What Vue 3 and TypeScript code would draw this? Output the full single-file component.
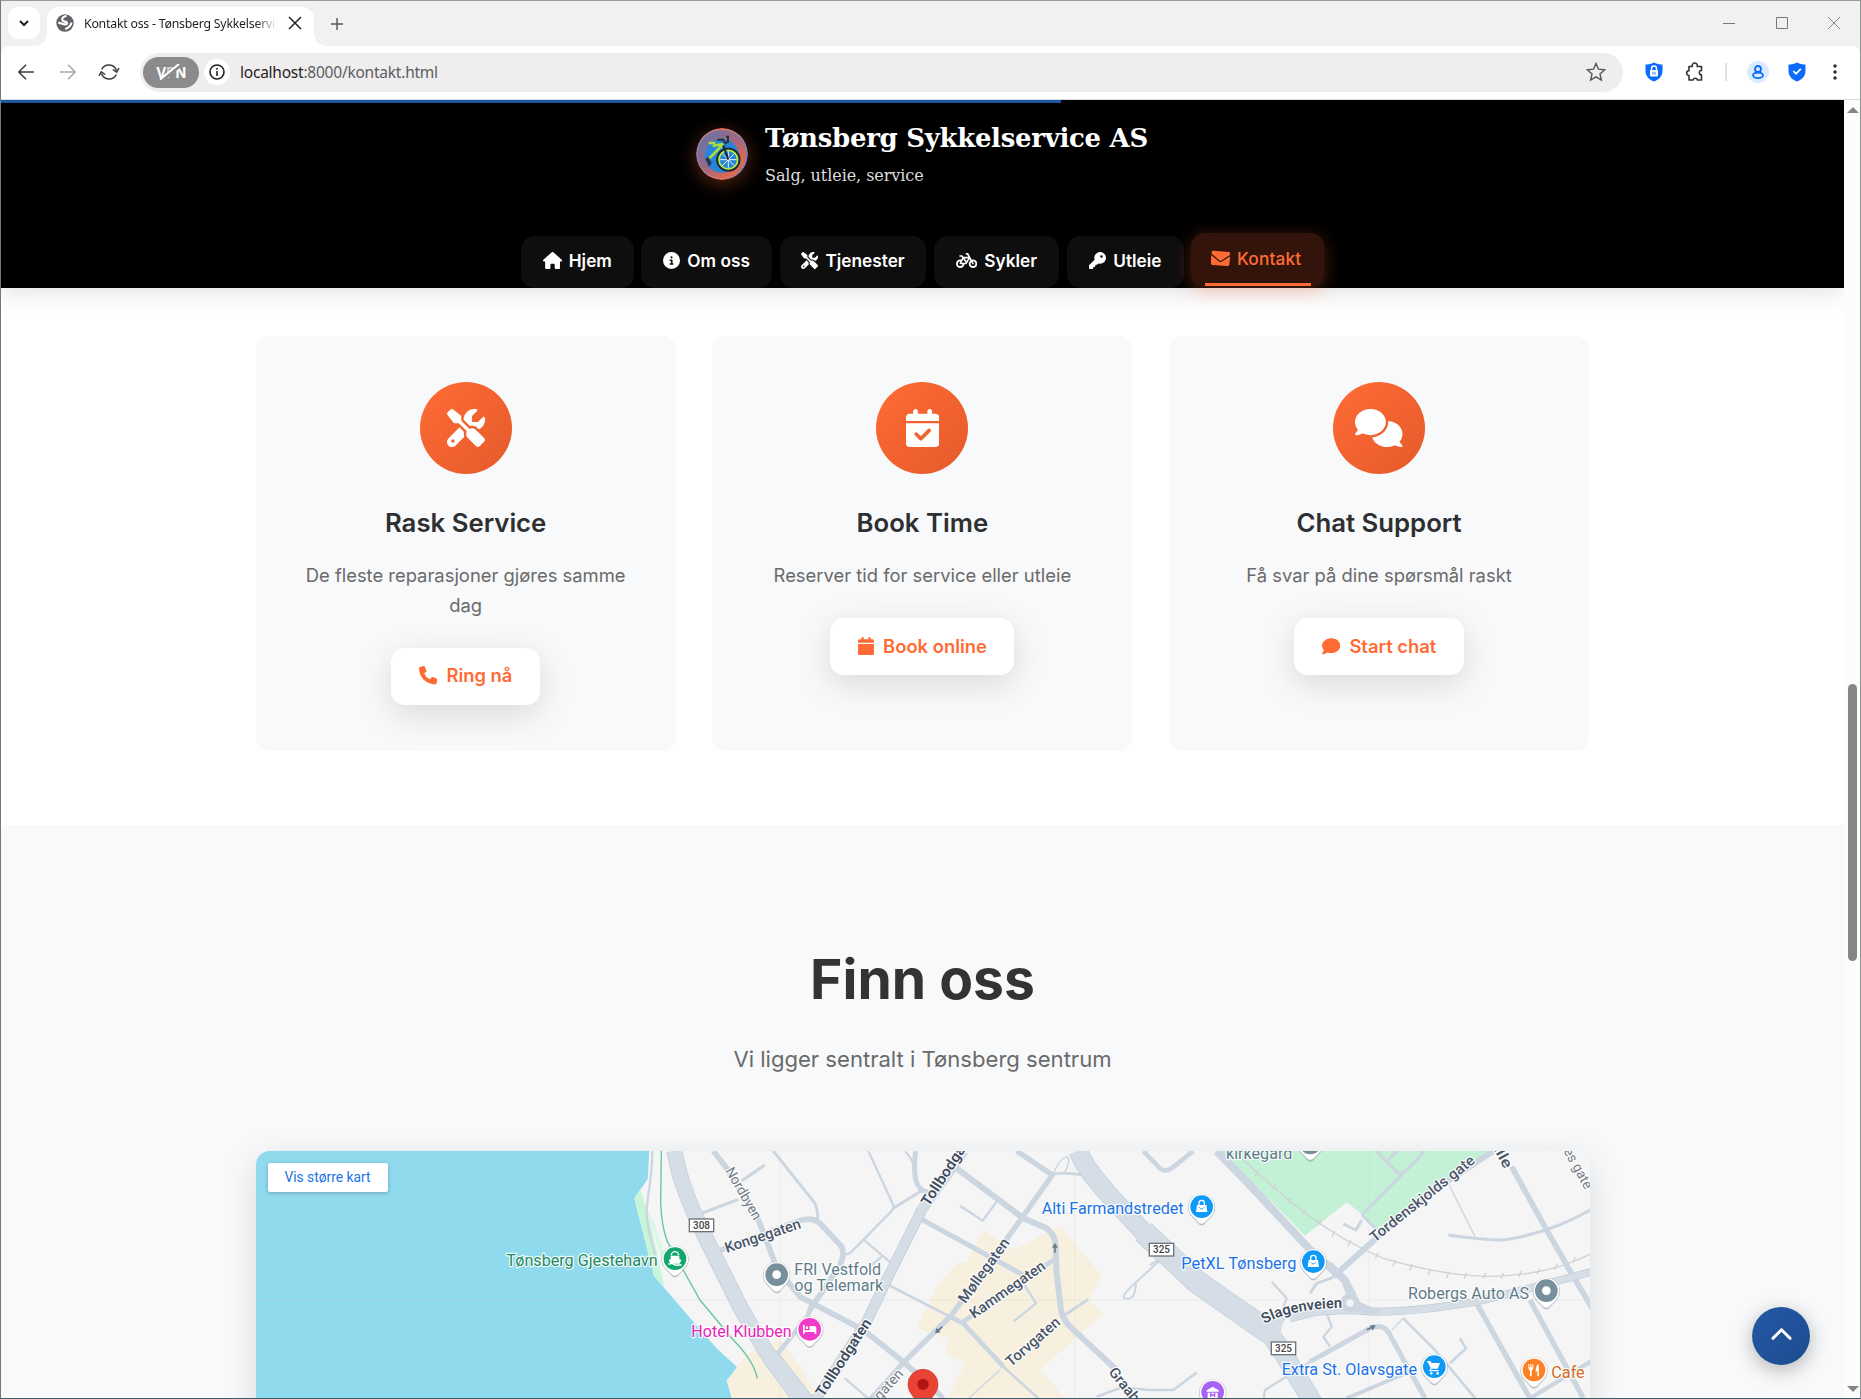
<script setup lang="ts">
interface Glyph { w: number; d: string }

const glyphs: Record<string, Glyph> = {
  house: { w: 576, d: 'M575.8 255.5c0 18-15 32.1-32 32.1h-32l.7 160.2c0 2.7-.2 5.4-.5 8.1V472c0 22.1-17.9 40-40 40H456c-1.1 0-2.2 0-3.3-.1c-1.4 .1-2.8 .1-4.2 .1H416 392c-22.1 0-40-17.9-40-40V448 384c0-17.7-14.3-32-32-32H256c-17.7 0-32 14.3-32 32v64 24c0 22.1-17.9 40-40 40H160 128.1c-1.5 0-3-.1-4.5-.2c-1.2 .1-2.4 .2-3.6 .2H104c-22.1 0-40-17.9-40-40V360c0-.9 0-1.9 .1-2.8V287.6H32c-18 0-32-14-32-32.1c0-9 3-17 10-24L266.4 8c7-7 15-8 22-8s15 2 21 7L564.8 231.5c8 7 12 15 11 24z' },
  info: { w: 512, d: 'M256 512A256 256 0 1 0 256 0a256 256 0 1 0 0 512zM216 336h24V272H216c-13.3 0-24-10.7-24-24s10.7-24 24-24h48c13.3 0 24 10.7 24 24v88h8c13.3 0 24 10.7 24 24s-10.7 24-24 24H216c-13.3 0-24-10.7-24-24s10.7-24 24-24zm40-208a32 32 0 1 1 0 64 32 32 0 1 1 0-64z' },
  tools: { w: 512, d: 'M78.6 5C69.1-2.4 55.6-1.5 47 7L7 47c-8.5 8.5-9.4 22-2.1 31.6l80 104c4.5 5.9 11.6 9.4 19 9.4h54.1l109 109c-14.7 29-10 65.4 14.3 89.6l112 112c12.5 12.5 32.8 12.5 45.3 0l64-64c12.5-12.5 12.5-32.8 0-45.3l-112-112c-24.2-24.2-60.6-29-89.6-14.3l-109-109V104c0-7.5-3.5-14.5-9.4-19L78.6 5zM19.9 396.1C7.2 408.8 0 426.1 0 444.1C0 481.6 30.4 512 67.9 512c18 0 35.3-7.2 48-19.9L233.7 374.3c-7.8-20.9-9-43.6-3.6-65.1l-61.7-61.7L19.9 396.1zM512 144c0-10.5-1.1-20.7-3.2-30.5c-2.4-11.2-16.1-14.1-24.2-6l-63.9 63.9c-3 3-7.1 4.7-11.3 4.7H352c-8.8 0-16-7.2-16-16V102.6c0-4.2 1.7-8.3 4.7-11.3l63.9-63.9c8.1-8.1 5.2-21.8-6-24.2C388.7 1.1 378.5 0 368 0C288.5 0 224 64.5 224 144l0 .8 85.3 85.3c36-9.1 75.8 .5 104 28.7L429 274.5c49-23 83-72.8 83-130.5zM56 432a24 24 0 1 1 48 0 24 24 0 1 1 -48 0z' },
  bicycle: { w: 640, d: 'M312 32c-13.3 0-24 10.7-24 24s10.7 24 24 24h25.7l34.6 64H222.9l-27.4-38C191 99.7 183.7 96 176 96H120c-13.3 0-24 10.7-24 24s10.7 24 24 24h43.7l22.1 30.7-26.6 53.1c-10-2.5-20.5-3.8-31.2-3.8C57.3 224 0 281.3 0 352s57.3 128 128 128c65.3 0 119.1-48.9 127-112h49c8.5 0 16.3-4.5 20.7-11.8l84.8-143.5 21.7 40.1C402.4 276.3 384 312 384 352c0 70.7 57.3 128 128 128s128-57.3 128-128s-57.3-128-128-128c-13.5 0-26.5 2.1-38.7 6L375.4 48.8C369.8 38.4 359 32 347.2 32H312zM458.6 303.7l32.3 59.7c6.3 11.7 20.9 16 32.5 9.7s16-20.9 9.7-32.5l-32.3-59.7c3.6-.6 7.4-.9 11.2-.9c39.8 0 72 32.2 72 72s-32.2 72-72 72s-72-32.2-72-72c0-18.6 7-35.5 18.6-48.3zM133.2 368h65c-7.3 32.1-36 56-70.2 56c-39.8 0-72-32.2-72-72s32.2-72 72-72c1.7 0 3.4 .1 5.1 .2l-24.2 48.5c-9 18.1 4.1 39.4 24.3 39.4zm33.7-48l50.7-101.3 72.9 101.2-.1 .1H166.8zm90.6-128H365.9L317 274.8 257.4 192z' },
  key: { w: 512, d: 'M336 352c97.2 0 176-78.8 176-176S433.2 0 336 0S160 78.8 160 176c0 18.7 2.9 36.8 8.3 53.7L7 391c-4.5 4.5-7 10.6-7 17v80c0 13.3 10.7 24 24 24h80c13.3 0 24-10.7 24-24V448h40c13.3 0 24-10.7 24-24V384h40c6.4 0 12.5-2.5 17-7l33.3-33.3c16.9 5.4 35 8.3 53.7 8.3zM376 96a40 40 0 1 1 0 80 40 40 0 1 1 0-80z' },
  envelope: { w: 512, d: 'M48 64C21.5 64 0 85.5 0 112c0 15.1 7.1 29.3 19.2 38.4L236.8 313.6c11.4 8.5 27 8.5 38.4 0L492.8 150.4c12.1-9.1 19.2-23.3 19.2-38.4c0-26.5-21.5-48-48-48H48zM0 176V384c0 35.3 28.7 64 64 64H448c35.3 0 64-28.7 64-64V176L294.4 339.2c-22.8 17.1-54 17.1-76.8 0L0 176z' },
  phone: { w: 512, d: 'M164.9 24.6c-7.7-18.6-28-28.5-47.4-23.2l-88 24C12.1 30.2 0 46 0 64C0 311.4 200.6 512 448 512c18 0 33.8-12.1 38.6-29.5l24-88c5.3-19.4-4.6-39.7-23.2-47.4l-96-40c-16.3-6.8-35.2-2.1-46.3 11.6L304.7 368C234.3 334.7 177.3 277.7 144 207.3L193.3 167c13.7-11.2 18.4-30 11.6-46.3l-40-96z' },
  calendar: { w: 448, d: 'M96 32V64H48C21.5 64 0 85.5 0 112v48H448V112c0-26.5-21.5-48-48-48H352V32c0-17.7-14.3-32-32-32s-32 14.3-32 32V64H160V32c0-17.7-14.3-32-32-32S96 14.3 96 32zM448 192H0V464c0 26.5 21.5 48 48 48H400c26.5 0 48-21.5 48-48V192z' },
  calendarCheck: { w: 448, d: 'M128 0c17.7 0 32 14.3 32 32V64H288V32c0-17.7 14.3-32 32-32s32 14.3 32 32V64h48c26.5 0 48 21.5 48 48v48H0V112C0 85.5 21.5 64 48 64H96V32c0-17.7 14.3-32 32-32zM0 192H448V464c0 26.5-21.5 48-48 48H48c-26.5 0-48-21.5-48-48V192zM329 305c9.4-9.4 9.4-24.6 0-33.9s-24.6-9.4-33.9 0l-95 95-47-47c-9.4-9.4-24.6-9.4-33.9 0s-9.4 24.6 0 33.9l64 64c9.4 9.4 24.6 9.4 33.9 0L329 305z' },
  comments: { w: 640, d: 'M208 352c114.9 0 208-78.8 208-176S322.9 0 208 0S0 78.8 0 176c0 38.6 14.7 74.3 39.6 103.4c-3.5 9.4-8.7 17.7-14.2 24.7c-4.8 6.2-9.7 11-13.3 14.3c-1.8 1.6-3.3 2.9-4.3 3.7c-.5 .4-.9 .7-1.1 .8l-.2 .2 0 0 0 0C1 327.2-1.4 334.4 .8 340.9S9.1 352 16 352c21.8 0 43.8-5.6 62.1-12.5c9.2-3.5 17.8-7.4 25.3-11.4C134.1 343.3 169.8 352 208 352zM448 176c0 112.3-99.1 196.9-216.5 207C255.8 457.4 336.4 512 432 512c38.2 0 73.9-8.7 104.7-23.9c7.5 4 16 7.9 25.2 11.4c18.3 6.9 40.3 12.5 62.1 12.5c6.9 0 13.1-4.5 15.2-11.1c2.1-6.6-.2-13.8-5.8-17.9l0 0 0 0-.2-.2c-.2-.2-.6-.4-1.1-.8c-1-.8-2.5-2-4.3-3.7c-3.6-3.3-8.5-8.1-13.3-14.3c-5.5-7-10.7-15.4-14.2-24.7c24.9-29 39.6-64.7 39.6-103.4c0-92.8-84.9-168.9-192.6-175.5c.4 5.1 .6 10.3 .6 15.5z' },
  comment: { w: 512, d: 'M512 240c0 114.9-114.6 208-256 208c-37.1 0-72.3-6.4-104.1-17.9c-11.9 8.7-31.3 20.6-54.3 30.6C73.6 471.1 44.7 480 16 480c-6.5 0-12.3-3.9-14.8-9.9c-2.5-6-1.1-12.8 3.4-17.4l.3-.3c.3-.3 .7-.7 1.3-1.4c1.1-1.2 2.8-3.1 4.9-5.7c4.1-5 9.6-12.4 15.2-21.6c10-16.6 19.5-38.4 21.4-62.9C17.7 326.8 0 285.1 0 240C0 125.1 114.6 32 256 32s256 93.1 256 208z' },
  chevronUp: { w: 512, d: 'M233.4 105.4c12.5-12.5 32.8-12.5 45.3 0l192 192c12.5 12.5 12.5 32.8 0 45.3s-32.8 12.5-45.3 0L256 173.3 86.6 342.6c-12.5 12.5-32.8 12.5-45.3 0s-12.5-32.8 0-45.3l192-192z' },
}

interface NavItem { label: string; icon: string; cls: string; active?: boolean }
const nav: NavItem[] = [
  { label: 'Hjem', icon: 'house', cls: 'n-home' },
  { label: 'Om oss', icon: 'info', cls: 'n-about' },
  { label: 'Tjenester', icon: 'tools', cls: 'n-services' },
  { label: 'Sykler', icon: 'bicycle', cls: 'n-bikes' },
  { label: 'Utleie', icon: 'key', cls: 'n-rent' },
  { label: 'Kontakt', icon: 'envelope', cls: 'n-contact', active: true },
]

interface Card { title: string; text: string; icon: string; action: string; actionIcon: string }
const cards: Card[] = [
  { title: 'Rask Service', text: 'De fleste reparasjoner gjøres samme dag', icon: 'tools', action: 'Ring nå', actionIcon: 'phone' },
  { title: 'Book Time', text: 'Reserver tid for service eller utleie', icon: 'calendarCheck', action: 'Book online', actionIcon: 'calendar' },
  { title: 'Chat Support', text: 'Få svar på dine spørsmål raskt', icon: 'comments', action: 'Start chat', actionIcon: 'comment' },
]

/* Map units: three per CSS pixel. */
interface Road { d: string; w: number }
const roads: Road[] = [
  { d: 'M1207 33C1206 130 1188 180 1190 225C1192 270 1205 300 1215 345', w: 7 },
  { d: 'M1390 33L1430 85L1525 240L1560 330L1580 385L1650 470L1840 570L1960 665L2070 765L2080 780', w: 17 },
  { d: 'M1400 335L1650 242Q1690 228 1715 255L1775 320Q1785 345 1770 375L1680 510', w: 17 },
  { d: 'M1690 480L1672 530L1580 645', w: 14 },
  { d: 'M1570 33L1695 190Q1706 215 1702 240', w: 9 },
  { d: 'M1350 222L1465 178M1475 122L1545 75', w: 9 },
  { d: 'M1855 33L1930 195Q1932 210 1920 218L1805 335Q1795 345 1785 343', w: 7 },
  { d: 'M1930 205L2010 155L2035 152', w: 9 },
  { d: 'M1965 33Q1985 55 1990 75', w: 6 },
  { d: 'M1997 33C1988 110 1995 150 2035 158', w: 15 },
  { d: 'M1840 298L1925 370M1865 375L1895 350', w: 7 },
  { d: 'M1915 435L2100 530', w: 8 },
  { d: 'M2120 85L2320 235L2390 265Q2415 285 2416 310L2420 400L2433 510Q2440 540 2460 560L2600 690', w: 18 },
  { d: 'M2015 238L2210 345L2320 405', w: 15 },
  { d: 'M2320 430L2358 490L2290 545', w: 7 },
  { d: 'M2300 33L2407 105L2315 235L2105 525L1960 668L1860 780', w: 16 },
  { d: 'M2410 360L2140 545M2100 530L2140 550L2260 680', w: 14 },
  { d: 'M2260 680L2370 780', w: 8 },
  { d: 'M2250 690L2150 780', w: 4 },
  { d: 'M2440 528L2515 478', w: 9 },
  { d: 'M2130 197L2198 242L2240 185', w: 7 },
  { d: 'M2410 102Q2450 95 2510 108', w: 8 },
  { d: 'M2410 100Q2430 55 2450 50Q2465 60 2445 95', w: 4 },
  { d: 'M2730 360L2655 430Q2610 470 2625 475Q2655 485 2658 430', w: 6 },
  { d: 'M2680 33L2730 85Q2745 98 2765 85L2830 33', w: 14 },
  { d: 'M2540 770L2620 740M2640 745L2700 750L2770 750L2790 735L2840 698', w: 8 },
  { d: 'M1785 715L1860 780', w: 7 },
  { d: 'M2900 33L2990 125L3190 340L3285 420L3300 460', w: 24 },
  { d: 'M3240 370Q3300 430 3315 470', w: 14 },
  { d: 'M3730 33L3530 165L3390 285L3250 410', w: 18 },
  { d: 'M3595 285Q3700 300 3760 300Q3900 280 4025 208', w: 9 },
  { d: 'M3785 80L3890 270L3970 410L4030 510', w: 17 },
  { d: 'M3680 490L3840 775M3840 480L4000 775', w: 16 },
  { d: 'M3840 775L4025 663', w: 13 },
  { d: 'M3180 665L3360 565Q3405 545 3425 595L3525 775', w: 15 },
  { d: 'M3460 535L3555 630L3680 780', w: 8 },
  { d: 'M3600 670L3648 625L3630 595', w: 8 },
  { d: 'M3290 775L3490 690', w: 12 },
  { d: 'M3040 780L3045 750L3180 665', w: 7 },
  { d: 'M3065 425L3110 475L3100 500M3230 520L3245 560L3220 590L3240 620', w: 7 },
  { d: 'M3335 225L3500 60L3520 33M3380 33L3445 100M3415 60L3440 33M3335 225L3380 268M3445 100L3460 95', w: 9 },
  { d: 'M3280 252L3318 270L3335 240', w: 9 },
  { d: 'M3180 460L3200 430L3250 412', w: 9 },
  { d: 'M3595 130L3675 290M3460 535L3425 570', w: 4 },
  { d: 'M2740 350L2700 375', w: 6 },
]
const mainRoads: Road[] = [
  { d: 'M1273 33C1290 130 1330 220 1385 330L1470 500L1545 630L1660 790', w: 44 },
  { d: 'M1560 650L1670 790', w: 50 },
  { d: 'M2140 33L2015 210L1910 420L1850 545L1690 790', w: 28 },
  { d: 'M2485 33C2510 100 2590 180 2680 275L2820 410L3045 560L3100 640L3190 790', w: 54 },
  { d: 'M2680 275L2840 425L3060 580', w: 66 },
  { d: 'M3120 535L3200 515L3290 510L3380 515Q3500 515 3680 485L3860 440L4025 395', w: 20 },
]
const ticks = [[320, 100], [373, 142], [418, 182], [462, 215], [508, 248], [550, 282], [598, 310], [640, 330], [680, 347], [733, 370], [783, 382], [838, 396], [893, 405], [946, 407], [1003, 408], [1057, 408], [1110, 402], [1165, 394], [1218, 380], [1272, 360]]

interface Label { t: string; x: number; y: number; len: number; cls: string; r?: number }
const labels: Label[] = [
  { t: 'Tønsberg Gjestehavn', x: 769, y: 379, len: 454, cls: 'green' },
  { t: 'FRI Vestfold', x: 1633, y: 404, len: 260, cls: 'slate' },
  { t: 'og Telemark', x: 1633, y: 453, len: 267, cls: 'slate' },
  { t: 'Hotel Klubben', x: 1324, y: 592, len: 301, cls: 'pink' },
  { t: 'Alti Farmandstredet', x: 2375, y: 223, len: 426, cls: 'blue' },
  { t: 'PetXL Tønsberg', x: 2794, y: 388, len: 345, cls: 'blue' },
  { t: 'Extra St. Olavsgate', x: 3095, y: 704, len: 406, cls: 'blue' },
  { t: 'Robergs Auto AS', x: 3474, y: 476, len: 363, cls: 'slate' },
  { t: 'Cafe', x: 3904, y: 713, len: 100, cls: 'orange' },
  { t: 'kirkegård', x: 2928, y: 56, len: 199, cls: 'slate' },
  { t: 'Nordbyen', x: 1425, y: 92, len: 174, cls: 'minor', r: 60 },
  { t: 'Kongegaten', x: 1430, y: 339, len: 238, cls: 'street', r: -18.5 },
  { t: 'Tollbodga', x: 2036, y: 201, len: 206, cls: 'major', r: -57 },
  { t: 'Tollbodgaten', x: 1720, y: 773, len: 268, cls: 'major', r: -57 },
  { t: 'gaten', x: 1890, y: 783, len: 108, cls: 'minor', r: -48 },
  { t: 'Møllegaten', x: 2146, y: 493, len: 229, cls: 'street', r: -54 },
  { t: 'Kammegaten', x: 2172, y: 537, len: 266, cls: 'street', r: -35 },
  { t: 'Torvgaten', x: 2283, y: 682, len: 200, cls: 'street', r: -41 },
  { t: 'Graab', x: 2574, y: 697, len: 120, cls: 'street', r: 51 },
  { t: 'Tordenskjolds gate', x: 3374, y: 308, len: 388, cls: 'street', r: -38.5 },
  { t: 'alle', x: 3722, y: 13, len: 86, cls: 'street', r: 61 },
  { t: 'es gate', x: 3940, y: 33, len: 134, cls: 'minor', r: 61 },
]

interface Pin { x: number; y: number; color: string; kind: string }
const pins: Pin[] = [
  { x: 1275, y: 356, color: '#12a56c', kind: 'ferry' },
  { x: 1580, y: 404, color: '#78909c', kind: 'dot' },
  { x: 1679, y: 568, color: '#f13bc9', kind: 'bed' },
  { x: 2855, y: 200, color: '#0f9af7', kind: 'bag' },
  { x: 3190, y: 365, color: '#0f9af7', kind: 'bag' },
  { x: 3553, y: 680, color: '#0f9af7', kind: 'cart' },
  { x: 3889, y: 452, color: '#78909c', kind: 'dot' },
  { x: 3852, y: 690, color: '#ff8126', kind: 'food' },
  { x: 2888, y: 757, color: '#a763f5', kind: 'museum' },
  { x: 3181, y: 9, color: '#78909c', kind: 'dot' },
]
const shields = [{ t: '308', x: 1318, y: 237 }, { t: '325', x: 2698, y: 310 }, { t: '325', x: 3064, y: 606 }]
const arrows = [{ x: 2415, y: 323, r: -90 }, { x: 2066, y: 570, r: 138 }, { x: 3364, y: 563, r: -25 }]
</script>

<template>
  <div class="window">
    <div class="tabstrip">
      <button class="tab-search"><svg width="12" height="12" viewBox="0 0 12 12"><path d="M2 4l4 4 4-4" fill="none" stroke="#222" stroke-width="2" /></svg></button>
      <div class="tab">
        <svg class="globe" width="18" height="18" viewBox="0 0 18 18">
          <circle cx="9" cy="9" r="8.7" fill="#5f6368" />
          <path d="M10.500 1.800C7.500 2.600 6 4.200 6.300 6c.4 2 3.600 1.200 4.600 2.600.7 1.200-.5 1.900-2 1.800-2.200-.2-3.900-1.800-6.700-1.600" fill="none" stroke="#fff" stroke-width="2.200" />
          <path d="M15.500 8.500c-.5 3.300-2.700 5-6.300 6.700" fill="none" stroke="#fff" stroke-width="2" />
        </svg>
        <span class="tab-title">Kontakt oss - Tønsberg Sykkelservi</span>
        <svg class="tab-close" width="14" height="14" viewBox="0 0 14 14"><path d="M1 1l12 12M13 1L1 13" stroke="#222" stroke-width="1.500" /></svg>
      </div>
      <svg class="plus" width="12" height="12" viewBox="0 0 12 12"><path d="M6 0v12M0 6h12" stroke="#555" stroke-width="1.400" /></svg>
      <div class="winbtns">
        <svg width="12" height="12" viewBox="0 0 12 12"><path d="M0 6.500h12" stroke="#777" /></svg>
        <svg width="12" height="12" viewBox="0 0 12 12"><path d="M.5.5h11v11H.5z" fill="none" stroke="#777" /></svg>
        <svg width="12" height="12" viewBox="0 0 12 12"><path d="M0 0l12 12M12 0L0 12" stroke="#888" /></svg>
      </div>
    </div>

    <div class="toolbar">
      <svg width="18" height="18" viewBox="0 0 18 18"><path d="M17 9H2M9 1.800L1.800 9 9 16.200" fill="none" stroke="#3c3c3c" stroke-width="1.500" /></svg>
      <svg class="fwd" width="18" height="18" viewBox="0 0 18 18"><path d="M1 9h15M9 1.800L16.200 9 9 16.200" fill="none" stroke="#a8a8a8" stroke-width="1.500" /></svg>
      <svg class="reload" width="22" height="20" viewBox="0 0 22 20">
        <path d="M3.700 7.500A8 8 0 0 1 18.500 8.500M18.300 12.500A8 8 0 0 1 3.500 11.500" fill="none" stroke="#3c3c3c" stroke-width="1.500" />
        <path d="M14.800 7.500l3.900 2.700 2.300-4M7.200 12.500L3.300 9.800 1 13.800" fill="none" stroke="#3c3c3c" stroke-width="1.500" />
      </svg>
      <div class="omnibox">
        <span class="vpn"><span>V<i>P</i>N</span><svg width="24" height="16" viewBox="0 0 24 16"><path d="M4 16.500L22.500 1.500" stroke="#8b8b8b" stroke-width="3" /><path d="M2 15.500L21 0" stroke="#fff" stroke-width="2" /></svg></span>
        <span class="site"><svg width="16" height="16" viewBox="0 0 16 16"><circle cx="8" cy="8" r="7" fill="none" stroke="#222" stroke-width="1.600" /><path d="M8 7v5M8 4v1.700" stroke="#222" stroke-width="1.600" /></svg></span>
        <span class="url"><b>localhost</b>:8000/kontakt.html</span>
        <svg class="star" width="20" height="20" viewBox="0 0 20 20"><path d="M10 1.500l2.500 5.700 6.200.6-4.700 4.100 1.400 6.100-5.400-3.200L4.600 18 6 11.900 1.300 7.800l6.200-.6z" fill="none" stroke="#555" stroke-width="1.400" /></svg>
      </div>
      <svg class="ext1" width="18" height="20" viewBox="0 0 18 20"><path d="M9 .5c3 1.500 5.500 2 8.500 2V9c0 5-3.500 8.700-8.500 10.500C4 17.700.5 14 .5 9V2.500C3.500 2.500 6 2 9 .500z" fill="#0b6cfb" /><rect x="5" y="8" width="8" height="6.500" rx="1" fill="#fff" /><path d="M6.500 8V6.500a2.500 2.500 0 0 1 5 0V8" fill="none" stroke="#fff" stroke-width="1.400" /><path d="M8 9.700v3M10 9.700v3" stroke="#0b6cfb" stroke-width=".8" /></svg>
      <svg class="ext2" width="20" height="20" viewBox="0 0 20 20"><path d="M4 4.500h3.300a2.600 2.600 0 1 1 4.900 0H16.500V8.500a2 2 0 0 0 0 4.300V18H12.500a2.200 2.200 0 0 0-4.300 0H4V13.500a2.400 2.400 0 1 1 0-4.800z" fill="none" stroke="#333" stroke-width="1.600" stroke-linejoin="round" /></svg>
      <span class="divider"></span>
      <span class="avatar"><svg width="12" height="14" viewBox="0 0 12 14"><circle cx="6" cy="4" r="3" fill="none" stroke="#0b6cfb" stroke-width="1.800" /><ellipse cx="6" cy="10.300" rx="5" ry="2.800" fill="none" stroke="#0b6cfb" stroke-width="1.800" /></svg></span>
      <svg class="shield" width="18" height="20" viewBox="0 0 18 20"><path d="M9 .5c3 1.500 5.500 2 8.500 2V9c0 5-3.500 8.700-8.500 10.500C4 17.700.5 14 .5 9V2.500C3.500 2.500 6 2 9 .500z" fill="#0b6cfb" /><path d="M5.300 9l2.700 2.800 4.800-4.900" fill="none" stroke="#fff" stroke-width="1.800" /></svg>
      <svg class="dots" width="4" height="16" viewBox="0 0 4 16"><circle cx="2" cy="2" r="1.800" fill="#333" /><circle cx="2" cy="8" r="1.800" fill="#333" /><circle cx="2" cy="14" r="1.800" fill="#333" /></svg>
    </div>

    <div class="viewport">
      <div class="page">
        <header class="site-header">
          <div class="progress"></div>
          <div class="brand">
            <svg class="logo" width="52" height="52" viewBox="108 98 156 156">
              <defs>
                <linearGradient id="ring" x1="0" y1="0" x2="1" y2="1"><stop offset="0" stop-color="#5478b5" /><stop offset=".5" stop-color="#a5667e" /><stop offset=".8" stop-color="#e0694f" /></linearGradient>
                <linearGradient id="edge" x1="0" y1="0" x2="1" y2="0"><stop offset="0" stop-color="#8a7ca0" /><stop offset=".5" stop-color="#ee7454" /><stop offset="1" stop-color="#6a80b8" /></linearGradient>
              </defs>
              <circle cx="186" cy="176" r="78" fill="url(#edge)" />
              <circle cx="186" cy="176" r="72" fill="url(#ring)" />
              <circle cx="185" cy="181" r="51" fill="#2685d8" />
              <path d="M136 190l10-6 9 20-8 10z" fill="#2d3648" />
              <path d="M146 143h20M190 146l-42 43M158 152l30-6" fill="none" stroke="#a8e03c" stroke-width="8" />
              <path d="M172 133h14M186 130l12 14M198 124h6v16l-10 5" fill="none" stroke="#263238" stroke-width="6" />
              <circle cx="205" cy="193" r="33" fill="#2685d8" stroke="#1b2b3a" stroke-width="7" />
              <circle cx="205" cy="193" r="28" fill="none" stroke="#b7ee3c" stroke-width="5" />
              <path d="M205 168v50M180 193h50M187 175l36 36M187 211l36-36" stroke="#e6f2fb" stroke-width="3" />
              <path d="M190 150l15 43" stroke="#223" stroke-width="6" />
            </svg>
            <div class="brand-text">
              <div class="brand-name">Tønsberg Sykkelservice AS</div>
              <div class="brand-sub">Salg, utleie, service</div>
            </div>
          </div>
          <nav class="nav">
            <a v-for="n in nav" :key="n.label" class="nav-item" :class="[n.cls, { active: n.active }]">
              <svg class="nav-icon" :viewBox="`0 0 ${glyphs[n.icon].w} 512`"><path :d="glyphs[n.icon].d" fill="currentColor" fill-rule="evenodd" /></svg>
              <span>{{ n.label }}</span>
            </a>
          </nav>
        </header>

        <section class="services">
          <article v-for="c in cards" :key="c.title" class="card">
            <div class="card-icon"><svg height="38" :viewBox="`0 0 ${glyphs[c.icon].w} 512`"><path :d="glyphs[c.icon].d" fill="#fff" fill-rule="evenodd" /></svg></div>
            <h3>{{ c.title }}</h3>
            <p>{{ c.text }}</p>
            <a class="btn"><svg height="18.400" :viewBox="`0 0 ${glyphs[c.actionIcon].w} 512`"><path :d="glyphs[c.actionIcon].d" fill="currentColor" /></svg>{{ c.action }}</a>
          </article>
        </section>

        <section class="find">
          <h2>Finn oss</h2>
          <p>Vi ligger sentralt i Tønsberg sentrum</p>
          <div class="map">
            <svg width="1334" height="260" viewBox="18 33 4002 780">
              <defs><path id="slagen" d="M3044 552Q3115 507 3280 503" /></defs>
              <rect x="18" y="33" width="4002" height="780" fill="#f5f5f5" />
              <path d="M18 33H1198L1193 118L1153 175L1212 408L1330 545L1400 625L1465 685L1430 720L1455 813H18z" fill="#90daee" />
              <path d="M1153 175L1172 152L1195 220L1243 442L1212 408z" fill="#c8f5d8" />
              <path d="M1195 220L1210 240L1240 330L1238 370z" fill="#d8f8e4" />
              <path d="M1430 722L1490 642L1530 625L1590 600L1640 665L1720 790H1455z" fill="#f8f0df" />
              <path d="M2200 270L2290 330L2430 258L2555 405L2515 480L2560 520L2370 690L2460 790H2085L2145 670L2085 640L2100 595L2000 565L2060 440L2120 370L2150 365z" fill="#f8f0df" />
              <path d="M2915 33H3720L3380 268L3335 222L3290 187L3165 287z" fill="#c3f1d5" />
              <path d="M708 33V790M18 480H4020M1590 33V790M2474 33V790M3357 33V790" stroke="#c9cdd0" stroke-opacity=".16" stroke-width="4" />
              <path d="M2970 50C3080 150 3200 270 3400 355Q3600 412 3730 409Q3900 405 4025 340" fill="none" stroke="#cfd2d4" stroke-width="4" />
              <path v-for="(t, i) in ticks" :key="'t' + i" :d="`M${t[0] + 2704} ${t[1] - 9}l-8 18`" stroke="#cfd2d4" stroke-width="4" />
              <path v-for="(r, i) in roads" :key="'r' + i" :d="r.d" :stroke-width="r.w" fill="none" stroke="#cbd6e0" stroke-linejoin="round" />
              <path d="M1234 33L1232 190Q1235 260 1252 305L1350 480L1450 600Q1510 660 1522 715" fill="none" stroke="#62c6a0" stroke-width="4" />
              <path v-for="(r, i) in mainRoads" :key="'c' + i" :d="r.d" :stroke-width="r.w + 4" fill="none" stroke="#bfccd8" stroke-linejoin="round" />
              <path v-for="(r, i) in mainRoads" :key="'m' + i" :d="r.d" :stroke-width="r.w" fill="none" stroke="#d5dee7" stroke-linejoin="round" />
              <path d="M3020 515L3150 515L3105 540Q3080 575 3110 615L3060 600L3000 545z" fill="#d5dee7" />
              <circle cx="3300" cy="489" r="20" fill="#f5f5f5" stroke="#cbd6e0" stroke-width="18" />
              <path d="M3318 478Q3350 500 3390 508L3380 522L3310 515z" fill="#cbd6e0" />
              <g v-for="(a, i) in arrows" :key="'a' + i" :transform="`translate(${a.x} ${a.y}) rotate(${a.r})`"><path d="M-15 0H6" stroke="#6c7a89" stroke-width="5" /><path d="M0-9L15 0L0 9z" fill="#6c7a89" /></g>
              <g v-for="(s, i) in shields" :key="'s' + i">
                <rect :x="s.x" :y="s.y" width="73" height="38" fill="#fff" stroke="#6f7277" stroke-width="4" />
                <text :x="s.x + 11" :y="s.y + 30" class="shield-text" textLength="51" lengthAdjust="spacingAndGlyphs">{{ s.t }}</text>
              </g>
              <text v-for="l in labels" :key="l.t + l.x" class="lbl" :class="l.cls" :textLength="l.len" lengthAdjust="spacingAndGlyphs" :transform="`translate(${l.x} ${l.y}) rotate(${l.r ?? 0})`">{{ l.t }}</text>
              <text class="lbl major"><textPath href="#slagen">Slagenveien</textPath></text>
              <g v-for="(p, i) in pins" :key="'p' + i" :transform="`translate(${p.x} ${p.y})`">
                <path d="M0 56Q-8 56-15 45L-29 31A41 41 0 1 1 29 31L15 45Q8 56 0 56z" fill="#98a0a8" opacity=".6" />
                <path d="M0 51Q-7 51-14 42L-28 28A39 39 0 1 1 28 28L14 42Q7 51 0 51z" fill="#fff" />
                <circle r="34" :fill="p.color" />
                <circle v-if="p.kind === 'dot'" r="13" fill="#fff" />
                <g v-else-if="p.kind === 'bag'"><path d="M-14-5H14L17 16H-17z" fill="#fff" /><path d="M-8-5V-11a8 8 0 0 1 16 0V-5" fill="none" stroke="#fff" stroke-width="4" /><path d="M-7 2Q0 12 7 2" fill="none" stroke="#0f9af7" stroke-width="3" /></g>
                <path v-else-if="p.kind === 'cart'" d="M-19-17h7l4 6h25l-7 17h-18l-3 4h24v4h-29l5-10-9-17h-4z M-9 16a4 4 0 1 0 .1 0M10 16a4 4 0 1 0 .1 0" fill="#fff" />
                <path v-else-if="p.kind === 'bed'" d="M-20-13h5v16H0V-10H13q7 0 7 7V14h-5V8h-30v6h-5zM-12-5a4 4 0 1 1 8 0 4 4 0 0 1-8 0z" fill="#fff" />
                <g v-else-if="p.kind === 'ferry'"><path d="M-11-10a11 11 0 0 1 22 0" fill="none" stroke="#fff" stroke-width="4" /><path d="M-13-9H13V1l6 3-5 11H-14l-5-11 6-3z" fill="#fff" /><path d="M-20 16q7 0 11-2 9 8 18 5 5 0 11 0" fill="none" stroke="#fff" stroke-width="4" /></g>
                <path v-else-if="p.kind === 'food'" d="M-17-18v11q0 7 5 8v18h5V1q5-1 5-8v-11h-3v10h-3v-10h-3v10h-3v-10zM14-18q-9 4-9 22h5v15h5z" fill="#fff" />
                <g v-else><path d="M-18-6L0-17 18-6v4h-36zM-15 1h30v22h-30z" fill="#fff" /><path d="M-6 14V4L0 10 6 4v10" fill="none" stroke="#a763f5" stroke-width="4" /></g>
              </g>
              <path d="M2019 688a45 45 0 0 1 45 45c0 32-30 42-38 80h-14c-8-38-38-48-38-80a45 45 0 0 1 45-45z" fill="#ea4335" stroke="#c5372c" stroke-width="2" />
              <circle cx="2019" cy="733" r="17" fill="#b31412" />
            </svg>
            <a class="map-link">Vis større kart</a>
          </div>
        </section>
        <button class="to-top"><svg width="23" height="23" viewBox="0 0 512 512"><path :d="glyphs.chevronUp.d" fill="#fff" /></svg></button>
      </div>
      <div class="scrollbar">
        <svg width="12" height="6" viewBox="0 0 12 6"><path d="M6 0l6 6H0z" fill="#858585" /></svg>
        <div class="thumb"></div>
        <svg class="down" width="12" height="6" viewBox="0 0 12 6"><path d="M0 0h12L6 6z" fill="#858585" /></svg>
      </div>
    </div>
  </div>
</template>

<style>
body { margin: 0; overflow: hidden; }
</style>

<style scoped>
* { box-sizing: border-box; }
button { border: 0; padding: 0; }
svg { display: block; flex: none; }
.window { width: 1861px; height: 1399px; border: 1px solid #a0a0a0; border-color: #999 #8d9399 #3c5c66 #777; background: #f1f1ef; display: flex; flex-direction: column; overflow: hidden; font-family: Inter, sans-serif; }
.tabstrip { height: 45px; flex: none; display: flex; background: #f1f1ef; }
.tab-search { width: 32px; height: 32px; margin: 6px 0 0 7px; border-radius: 11px; background: #fff; display: flex; align-items: center; justify-content: center; }
.tab { position: relative; width: 267px; height: 39px; margin: 6px 0 0 7px; padding: 0 12px 7px 9px; border-radius: 12px 12px 0 0; background: #fff; display: flex; align-items: center; }
.tab::before, .tab::after { content: ''; position: absolute; bottom: 0; width: 12px; height: 12px; }
.tab::before { left: -12px; background: radial-gradient(circle at 0 0, transparent 11.5px, #fff 12px); }
.tab::after { right: -12px; background: radial-gradient(circle at 100% 0, transparent 11.5px, #fff 12px); }
.tab-title { margin-left: 10px; width: 193px; overflow: hidden; white-space: nowrap; font: 12.300px 'Noto Sans', sans-serif; letter-spacing: -.22px; color: #1f1f1f; -webkit-mask-image: linear-gradient(90deg, #000 172px, transparent 193px); mask-image: linear-gradient(90deg, #000 172px, transparent 193px); }
.tab-close { margin-left: auto; }
.plus { margin: 17px 0 0 17px; }
.winbtns { margin: 16px 20px 0 auto; display: flex; gap: 40.500px; }
.toolbar { height: 54px; flex: none; display: flex; align-items: center; padding: 0 23px 1px 16px; background: #fff; border-bottom: 1px solid #dcdcdc; border-radius: 8px 8px 0 0; }
.fwd { margin-left: 24px; }
.reload { margin-left: 21px; }
.omnibox { width: 1483px; height: 39px; margin-left: 20px; border-radius: 20px; background: #efedee; display: flex; align-items: center; padding: 0 17px 0 3px; }
.vpn { position: relative; width: 56px; height: 31px; border-radius: 16px; background: #8b8b8b; color: #fff; font: 700 14px Inter, sans-serif; display: flex; align-items: center; justify-content: center; }
.vpn i { font-style: normal; opacity: .6; }
.vpn svg { position: absolute; left: 15px; top: 7px; }
.site { width: 26px; height: 26px; margin-left: 5px; border-radius: 50%; background: #fff; display: flex; align-items: center; justify-content: center; }
.url { margin-left: 10px; font: 15.500px 'Noto Sans', sans-serif; letter-spacing: -.23px; color: #5b5e63; }
.url b { font-weight: 400; color: #1f1f1f; }
.star { margin-left: auto; }
.ext1 { margin-left: 22px; }
.ext2 { margin-left: 22px; }
.divider { width: 2px; height: 18px; margin-left: 20px; background: #dfe1e4; }
.avatar { width: 22px; height: 22px; margin-left: 20px; border-radius: 50%; background: #dbebff; display: flex; align-items: center; justify-content: center; }
.shield { margin-left: 19px; }
.dots { margin-left: auto; }

.viewport { flex: 1; min-height: 0; display: flex; }
.page { position: relative; width: 1843px; height: 1298px; overflow: hidden; background: #fff; }
.site-header { position: relative; z-index: 2; height: 188px; background: #000; box-shadow: 0 4px 24px rgba(0, 0, 0, .12); }
.progress { width: 1060px; height: 3px; background: #1f56a0; }
.brand { display: flex; padding: 17px 0 0 695px; height: 129.700px; }
.logo { margin-top: 8px; border-radius: 50%; box-shadow: 0 4px 18px rgba(255, 107, 53, .35); }
.brand-text { margin-left: 17px; font-family: 'DejaVu Serif', 'Liberation Serif', serif; white-space: nowrap; }
.brand-name { font-size: 26px; line-height: 36px; font-weight: 700; letter-spacing: -.3px; color: #fff; }
.brand-sub { margin-top: 5px; font-size: 16px; line-height: 29px; letter-spacing: -.07px; color: #ddd; }
.nav { display: flex; gap: 7.800px; padding: 3px 0 0 520px; }
.nav-item { position: relative; height: 52.300px; border-radius: 13.800px; background: #0e0e0e; color: #fff; display: flex; align-items: center; justify-content: center; gap: 7px; font-size: 17.250px; font-weight: 600; white-space: nowrap; padding-bottom: 2px; }
.nav-icon { height: 17px; }
.n-home { width: 112.500px; }
.n-about { width: 130.700px; }
.n-services { width: 146.500px; }
.n-bikes { width: 125px; }
.n-rent { width: 117px; }
.n-contact { width: 133px; }
.nav-item.active { margin-top: -3px; margin-left: -1px; height: 54px; padding-right: 2px; background: #33140b; color: #ff6b35; font-weight: 500; letter-spacing: .15px; box-shadow: 0 4px 18px rgba(255, 107, 53, .3); }
.active .nav-icon { height: 19px; transform: rotate(4deg); }
.active::after { content: ''; position: absolute; left: 14px; right: 13px; bottom: 1px; height: 3px; background: #ff6b35; }

.services { display: flex; gap: 36.800px; padding: 48px 255px 73.600px 254.700px; height: 536.500px; }
.card { flex: 1; padding: 46px 36.800px; border-radius: 13.800px; background: #f8f9fb; text-align: center; display: flex; flex-direction: column; align-items: center; }
.card-icon { width: 92px; height: 92px; border-radius: 50%; background: linear-gradient(135deg, #ff6b35, #e55a2b); display: flex; align-items: center; justify-content: center; }
.card h3 { margin: 27.600px 0 18.400px; font-size: 25.760px; line-height: 1.6; font-weight: 600; color: #2d2f31; }
.card p { margin: 0 0 27.600px; font-size: 18.400px; line-height: 1.6; color: #6a6a6a; }
.btn { height: 57px; padding: 0 27.600px 1.500px; border-radius: 13.800px; background: #fff; color: #ff6b35; font-size: 18.400px; font-weight: 600; display: flex; align-items: center; gap: 9.200px; box-shadow: 0 9px 34px rgba(0, 0, 0, .13); }

.find { height: 700px; padding: 110.400px 0 0 254.500px; background: #f8f9fb; }
.find h2 { width: 1334px; margin: 0; text-align: center; font-size: 55.200px; line-height: 1.6; font-weight: 700; color: #333; }
.find p { width: 1334px; margin: 18.400px 0 73.600px; text-align: center; font-size: 22.080px; line-height: 1.6; color: #6a6a6a; }
.map { position: relative; width: 1334px; height: 300px; border-radius: 13.800px; overflow: hidden; box-shadow: 0 9px 36px rgba(0, 0, 0, .12); font-family: Roboto, sans-serif; }
.map-link { position: absolute; left: 12px; top: 12px; width: 120px; height: 29px; border-radius: 2px; background: #fff; color: #1a73e8; font-size: 13.800px; line-height: 28px; text-align: center; box-shadow: 0 1px 4px rgba(0, 0, 0, .25); }
.lbl { font-size: 47px; paint-order: stroke; stroke: #fff; stroke-width: 7px; stroke-linejoin: round; stroke-opacity: .9; }
.green { fill: #1e8a63; }
.slate { fill: #5f7c8a; }
.pink { fill: #e91fb7; }
.blue { fill: #1a73e8; }
.orange { fill: #d2691e; }
.street { fill: #4a5568; font-weight: 500; font-size: 44px; }
.major { fill: #414d5e; font-weight: 600; font-size: 44px; }
.minor { fill: #727a84; font-size: 42px; }
.shield-text { fill: #444; font-size: 30px; font-weight: 500; }
.to-top { position: absolute; left: 1751px; top: 1207px; width: 58px; height: 58px; border-radius: 50%; background: linear-gradient(135deg, #2557a5, #1c4c8f); display: flex; align-items: center; justify-content: center; box-shadow: 0 5px 20px rgba(0, 0, 0, .28); }
.to-top svg { margin-bottom: 2px; }
.scrollbar { width: 16px; background: #fcfcfc; display: flex; flex-direction: column; align-items: center; padding: 7px 1px 6px 2px; }
.thumb { width: 9px; height: 277px; margin-top: 571px; border-radius: 5px; background: #858585; }
.down { margin-top: auto; }
</style>
